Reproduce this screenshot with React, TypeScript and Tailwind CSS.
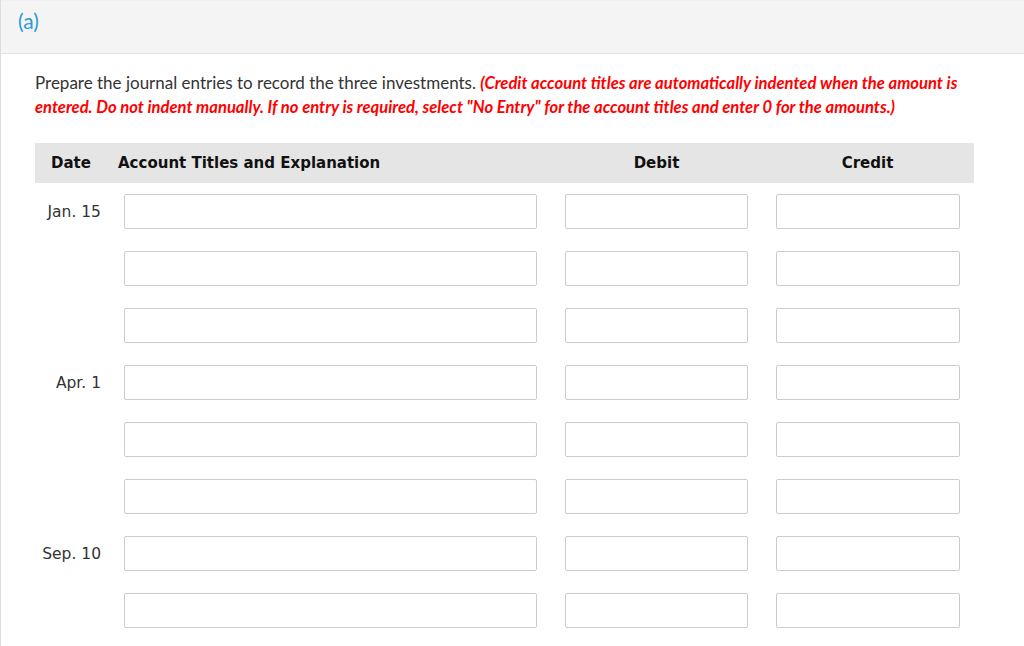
const rows = [
  { date: "Jan. 15" },
  { date: "" },
  { date: "" },
  { date: "Apr. 1" },
  { date: "" },
  { date: "" },
  { date: "Sep. 10" },
  { date: "" },
]

function Field({ className }: { className: string }) {
  return (
    <input
      type="text"
      className={`h-[35px] rounded-[2px] border border-[#cccccc] bg-white outline-none ${className}`}
    />
  )
}

export default function App() {
  return (
    <div className="min-h-[646px] border-l border-[#dddddd] bg-white">
      <div className="h-[54px] border-b border-t border-[#e2e2e2] border-t-[#f0f0f0] bg-[#f4f4f4] pl-[17px] pt-[4px]">
        <span className="font-['Lato','Open_Sans',sans-serif] text-[21px] text-[#2b9bd8]">(a)</span>
      </div>

      <div className="pl-[34px] pt-[17px]">
        <p className="w-[940px] font-['Lato',sans-serif] text-[17px] leading-[23px] text-[#333333]">
          Prepare the journal entries to record the three investments.{" "}
          <span className="text-[16.6px] font-bold italic text-[#ff0000]">
            (Credit account titles are automatically indented when the amount is entered. Do not indent manually. If
            no entry is required, select "No Entry" for the account titles and enter 0 for the amounts.)
          </span>
        </p>

        <div className="mt-[24px] w-[939px] font-['DejaVu_Sans',sans-serif]">
          <div className="grid h-[40px] grid-cols-[89px_441px_211px_198px] items-center bg-[#e5e5e5] text-[15px] font-bold text-[#111111]">
            <div className="pl-[16px]">Date</div>
            <div className="-ml-[6px]">Account Titles and Explanation</div>
            <div className="w-[183px] text-center">Debit</div>
            <div className="w-[183px] text-center">Credit</div>
          </div>

          <div className="grid grid-cols-[89px_441px_211px_198px] items-center gap-y-[22px] pt-[11px]">
            {rows.map((r, i) => (
              <div key={i} className="contents">
                <div className="pr-[23px] pt-[2px] text-right text-[15.5px] text-[#333333]">{r.date}</div>
                <Field className="w-[413px]" />
                <Field className="w-[183px]" />
                <Field className="w-[184px]" />
              </div>
            ))}
          </div>
        </div>
      </div>
    </div>
  )
}
